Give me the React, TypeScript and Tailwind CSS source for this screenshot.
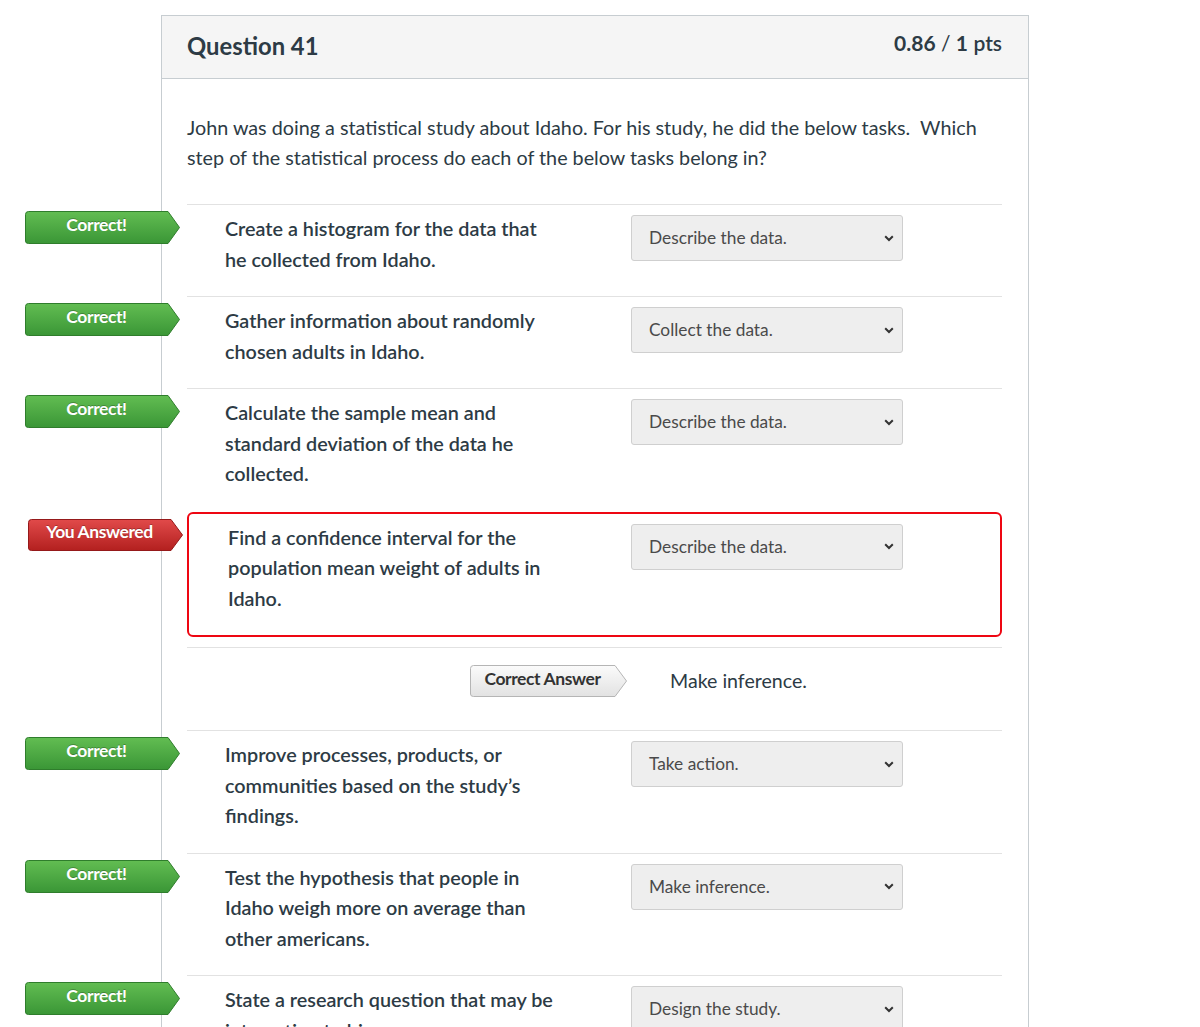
import React from "react";

type Tone = "green" | "red" | "gray";

const TONES: Record<Tone, { top: string; bottom: string; stroke: string; text: string }> = {
  green: { top: "#62bd52", bottom: "#3a9636", stroke: "#2f7d2c", text: "text-white" },
  red: { top: "#e14a4a", bottom: "#b3201f", stroke: "#95191a", text: "text-white" },
  gray: { top: "#fbfbfb", bottom: "#e2e2e2", stroke: "#b5b5b5", text: "text-[#333]" },
};

function Badge({ tone, label, width, height }: { tone: Tone; label: string; width: number; height: number }) {
  const c = TONES[tone];
  const tip = 12;
  const r = 3;
  const d = `M${r + 0.5},0.5 H${width - tip} L${width - 0.5},${height / 2} L${width - tip},${height - 0.5} H${r + 0.5} Q0.5,${height - 0.5} 0.5,${height - r} V${r + 0.5} Q0.5,0.5 ${r + 0.5},0.5 Z`;
  return (
    <div className="relative" style={{ width, height }}>
      <svg className="absolute inset-0" width={width} height={height} viewBox={`0 0 ${width} ${height}`}>
        <defs>
          <linearGradient id={`badge-${tone}`} x1="0" y1="0" x2="0" y2="1">
            <stop offset="0" stopColor={c.top} />
            <stop offset="1" stopColor={c.bottom} />
          </linearGradient>
        </defs>
        <path d={d} fill={`url(#badge-${tone})`} stroke={c.stroke} strokeWidth="1" />
      </svg>
      <span
        className={`relative flex h-full items-center justify-center pb-[4px] text-[17.5px] font-bold tracking-[-0.4px] ${c.text} ${
          tone === "gray" ? "" : "[text-shadow:0_-1px_0_rgba(0,0,0,0.25)]"
        }`}
        style={{ width: width - tip }}
      >
        {label}
      </span>
    </div>
  );
}

function FakeSelect({ value }: { value: string }) {
  return (
    <div className="flex h-[46px] w-[272px] shrink-0 items-center justify-between rounded-[3px] border border-[#cfcfcf] bg-[#eeeeee] pl-[17px] pr-[8px] text-[17.3px] text-[#4a4a4a]">
      <span>{value}</span>
      <svg width="10" height="7" viewBox="0 0 10 7" fill="none">
        <path d="M1.2 1.2 5 5 8.8 1.2" stroke="#333" strokeWidth="2" />
      </svg>
    </div>
  );
}

type Row = { text: string; answer: string; correct: boolean; right?: string };

const ROWS: Row[] = [
  { text: "Create a histogram for the data that he collected from Idaho.", answer: "Describe the data.", correct: true },
  { text: "Gather information about randomly chosen adults in Idaho.", answer: "Collect the data.", correct: true },
  { text: "Calculate the sample mean and standard deviation of the data he collected.", answer: "Describe the data.", correct: true },
  {
    text: "Find a confidence interval for the population mean weight of adults in Idaho.",
    answer: "Describe the data.",
    correct: false,
    right: "Make inference.",
  },
  { text: "Improve processes, products, or communities based on the study\u2019s findings.", answer: "Take action.", correct: true },
  { text: "Test the hypothesis that people in Idaho weigh more on average than other americans.", answer: "Make inference.", correct: true },
  { text: "State a research question that may be interesting to him.", answer: "Design the study.", correct: true },
];

function AnswerRow({ row }: { row: Row }) {
  return (
    <div className="flex items-start pt-[8px] pb-[22px] pl-[38px]">
      <div className="w-[334px] text-[19.8px] font-semibold leading-[30.5px] text-[#2d3b45]">{row.text}</div>
      <div className="ml-[72px] mt-[2px]">
        <FakeSelect value={row.answer} />
      </div>
    </div>
  );
}

export default function App() {
  return (
    <div className="min-h-screen bg-white font-['Lato','Liberation_Sans',sans-serif] text-[#2d3b45]">
      <div className="ml-[161px] mt-[15px] w-[868px] border border-b-0 border-[#c7cdd1]">
        <div className="flex h-[63px] items-start justify-between border-b border-[#c7cdd1] bg-[#f5f5f5] pl-[25px] pr-[26px] pt-[15px]">
          <h2 className="text-[23.8px] font-bold leading-[30px] text-[#2d3b45]">Question 41</h2>
          <div className="text-[21px] leading-[24px] text-[#2d3b45]">
            <span className="font-bold">0.86</span> / <span className="font-bold">1</span>{" "}
            <span className="font-semibold">pts</span>
          </div>
        </div>

        <div className="pl-[25px] pr-[26px] pt-[34px] pb-10">
          <p className="text-[19.75px] leading-[30px]">
            John was doing a statistical study about Idaho. For his study, he did the below tasks.&nbsp; Which step of the
            statistical process do each of the below tasks belong in?
          </p>

          <div className="mt-[31px]">
            {ROWS.map((row, i) =>
              row.correct ? (
                <div key={i} className="relative border-t border-[#e2e2e2]">
                  <div className="absolute top-[6px] left-[-162px]">
                    <Badge tone="green" label="Correct!" width={155} height={33} />
                  </div>
                  <AnswerRow row={row} />
                </div>
              ) : (
                <div key={i}>
                  <div className="relative mt-[1px] rounded-[6px] border-2 border-[#ee0612]">
                    <div className="absolute top-[5px] left-[-161px]">
                      <Badge tone="red" label="You Answered" width={155} height={32} />
                    </div>
                    <div className="flex items-start pt-[8px] pb-[22px] pl-[39px]">
                      <div className="w-[334px] text-[19.8px] font-semibold leading-[30.5px] text-[#2d3b45]">
                        {row.text}
                      </div>
                      <div className="ml-[69px] mt-[2px]">
                        <FakeSelect value={row.answer} />
                      </div>
                    </div>
                  </div>
                  <div className="mt-[10px] h-[83px] border-t border-[#e2e2e2] pl-[283px] pt-[17px]">
                    <div className="flex items-center">
                      <Badge tone="gray" label="Correct Answer" width={157} height={32} />
                      <span className="ml-[43px] text-[19.6px] text-[#2d3b45]">{row.right}</span>
                    </div>
                  </div>
                </div>
              )
            )}
          </div>
        </div>
      </div>
    </div>
  );
}
